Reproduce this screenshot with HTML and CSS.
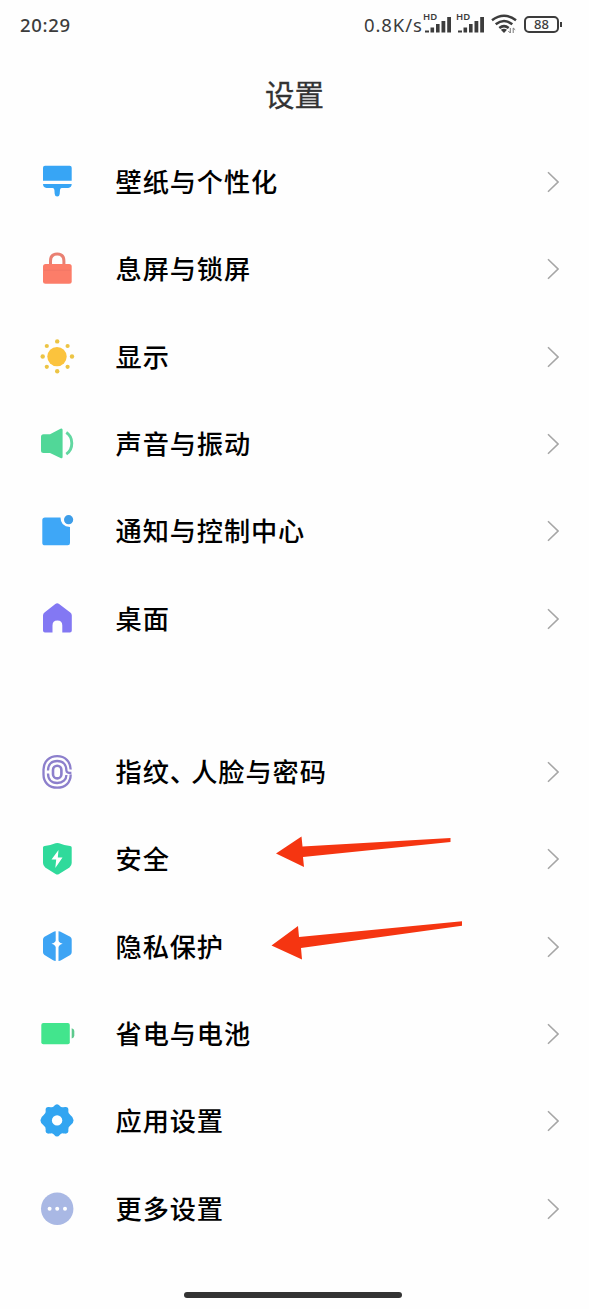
FILE: index.html
```html
<!DOCTYPE html>
<html lang="zh-CN">
<head>
<meta charset="utf-8">
<title>设置</title>
<link rel="stylesheet" href="styles.css">
</head>
<body>
<div class="phone">
  <header class="status">
    <span class="time">20:29</span>
    <span class="speed">0.8K/s</span>
    <span class="signal"><span class="hd">HD</span>
      <svg width="28" height="20" viewBox="0 0 28 20"><path d="M1 17.500h4v-2H1zM6.500 17.500h3.600v-5H6.500zM12 17.500h3.600v-8.500H12zM17.500 17.500h3.800V6h-3.800zM23.200 17.500H27V2h-3.800z"/></svg></span>
    <span class="signal"><span class="hd">HD</span>
      <svg width="28" height="20" viewBox="0 0 28 20"><path d="M1 17.500h4v-2H1zM6.500 17.500h3.600v-5H6.500zM12 17.500h3.600v-8.500H12zM17.500 17.500h3.800V6h-3.800zM23.200 17.500H27V2h-3.800z"/></svg></span>
    <svg class="wifi" width="26" height="20" viewBox="0 0 26 20">
      <g fill="none" stroke="#3c3c3c" stroke-width="2.500"><path d="M1 6.300Q13-2.700 25 6.300M4.700 10.300Q13 3.800 21.300 10.300M8.300 14Q13 10.300 17.700 14"/></g>
      <path d="M9.800 15.700Q13 13.600 16 15.700L13 19z"/><path d="M19.300 14v5l-2-2M22.200 19v-5l2 1.800" fill="none" stroke="#777"/>
    </svg>
    <span class="battery"><span class="level">88</span></span>
  </header>
  <h1 class="title">设置</h1>
  <main>
    <section class="group">
      <div class="row"><svg class="icon" viewBox="0 0 40 40" fill="#37a5f5"><path d="M8 3.800h24.700q2 0 2 2v12.900H6V5.800q0-2 2-2zM6 22h28.700q0 3.500-3.500 4h-6.500q-1.500 0-1.700 2l-.3 4q-.2 2.500-2.500 2.500t-2.500-2.500l-.3-4q-.2-2-1.700-2H9.500Q6 25.500 6 22z"/></svg><span class="label">壁纸与个性化</span><svg class="chev" viewBox="0 0 12 22"><path d="M1 1.300 11 11 1 20.700"/></svg></div>
      <div class="row"><svg class="icon" viewBox="0 0 40 40"><path d="M13.500 17v-5q0-7 6.700-7t6.700 7v5" fill="none" stroke="#e98072" stroke-width="3"/><rect x="6" y="15" width="28.700" height="19.700" rx="2.500" fill="#fc7d69"/><path d="M7 21.300h26.700" stroke="#ef7664" stroke-width=".7"/></svg><span class="label">息屏与锁屏</span><svg class="chev" viewBox="0 0 12 22"><path d="M1 1.300 11 11 1 20.700"/></svg></div>
      <div class="row"><svg class="icon" viewBox="0 0 40 40" fill="#fbc33d"><circle cx="20" cy="19.600" r="9.700"/><g fill="#ecc444"><circle cx="20.200" cy="4.400" r="2.200"/><circle cx="20.200" cy="34.300" r="2.200"/><circle cx="5.700" cy="19.500" r="2.200"/><circle cx="35" cy="19.500" r="2.200"/><circle cx="9.800" cy="9" r="2.100"/><circle cx="30.600" cy="9" r="2.100"/><circle cx="9.800" cy="29.800" r="2.100"/><circle cx="30.600" cy="29.800" r="2.100"/></g></svg><span class="label">显示</span><svg class="chev" viewBox="0 0 12 22"><path d="M1 1.300 11 11 1 20.700"/></svg></div>
      <div class="row"><svg class="icon" viewBox="0 0 40 40" fill="#51d798"><path d="M6.500 10.300H13L23.500 4.800q2.100-1 2.100 1.200v26.700q0 2.200-2.100 1.200L13 29H6.500Q4 29 4 26.500V12.800q0-2.500 2.500-2.500z"/><path d="M29.300 8.500Q34.800 12 34.800 19.300t-5.500 10.800" fill="none" stroke="#62d7a1" stroke-width="2.900"/></svg><span class="label">声音与振动</span><svg class="chev" viewBox="0 0 12 22"><path d="M1 1.300 11 11 1 20.700"/></svg></div>
      <div class="row"><svg class="icon" viewBox="0 0 40 40"><path d="M8 6.500h15.500q0 9 9.500 9.500v16q0 2.300-2.300 2.300H8q-2.700 0-2.700-2.300V9Q5.300 6.500 8 6.500z" fill="#3ea7f7"/><circle cx="31.600" cy="8.700" r="4.600" fill="#3d9de8"/></svg><span class="label">通知与控制中心</span><svg class="chev" viewBox="0 0 12 22"><path d="M1 1.300 11 11 1 20.700"/></svg></div>
      <div class="row"><svg class="icon" viewBox="0 0 40 40"><path d="M18.300 5q1.900-1.500 3.800 0l11.200 8.500q1.500 1.200 1.500 3V31.500q0 2-2 2h-7.500v-7q0-5-4.900-5t-4.900 5v7H8q-2 0-2-2v-15q0-1.800 1.500-3z" fill="#8378f3"/></svg><span class="label">桌面</span><svg class="chev" viewBox="0 0 12 22"><path d="M1 1.300 11 11 1 20.700"/></svg></div>
    </section>
    <section class="group">
      <div class="row"><svg class="icon" viewBox="0 0 40 40" fill="none" stroke="#8c7fcc" stroke-width="2.300"><path d="M33.700 17.500C33.500 9.500 28 4.200 20.200 4.200S6.500 9.500 6.500 17.500v5c0 8 5.500 13.200 13.700 13.200S33.700 30.500 33.700 22.500"/><path d="M11 18.500C11 12.500 14.500 9 20.200 9s9.200 3.500 9.200 9.500q0 2.600 5 2.500M11 21.500c0 6 3.500 9.500 9.200 9.500s9.200-3.500 9.200-8"/><rect x="16" y="13.800" width="8.400" height="12.600" rx="4.200" stroke-width="2.600"/></svg><span class="label">指纹<span class="comma">、</span>人脸与密码</span><svg class="chev" viewBox="0 0 12 22"><path d="M1 1.300 11 11 1 20.700"/></svg></div>
      <div class="row"><svg class="icon" viewBox="0 0 40 40"><path d="M18.500 4.300q1.800-.8 3.600 0 5 2.200 11 2.600 1.600.1 1.600 1.700V24q0 2.700-2.200 4.400L22 35q-1.700 1-3.400 0L8.200 28.400Q6 26.700 6 24V8.600Q6 7 7.600 6.900q5.900-.4 10.900-2.600z" fill="#2fda9b"/><path d="M21.500 11 14.500 20.500h4.700L18.300 29 25.500 18.500h-4.700z" fill="#fff"/></svg><span class="label">安全</span><svg class="chev" viewBox="0 0 12 22"><path d="M1 1.300 11 11 1 20.700"/></svg></div>
      <div class="row"><svg class="icon" viewBox="0 0 40 40"><path d="M18.700 4.300V34q-1.500 0-3-1L7.500 28Q6 27 6 25.300V12.500q0-1.700 1.500-2.700L15.700 5.200q1.500-.9 3-.9zM21.500 4.300V34q1.500 0 3-1l8.700-5q1.500-1 1.500-2.700V12.500q0-1.700-1.500-2.700l-8.700-4.600q-1.500-.9-3-.9z" fill="#3da4f4"/><path d="M20.100 10.500q.9 5.200 5.600 6.300-4.700 1.100-5.600 6.300-.9-5.200-5.600-6.300 4.700-1.100 5.600-6.300z" fill="#fff"/></svg><span class="label">隐私保护</span><svg class="chev" viewBox="0 0 12 22"><path d="M1 1.300 11 11 1 20.700"/></svg></div>
      <div class="row"><svg class="icon" viewBox="0 0 40 40"><rect x="4.300" y="9" width="28.500" height="21.300" rx="2" fill="#42e58d"/><path d="M34.700 14.300q2.600.4 2.600 2.700v4.700q0 2.300-2.600 2.700z" fill="#5cc98d"/></svg><span class="label">省电与电池</span><svg class="chev" viewBox="0 0 12 22"><path d="M1 1.300 11 11 1 20.700"/></svg></div>
      <div class="row"><svg class="icon" viewBox="0 0 40 40"><path d="M20 3.200q1.600 0 2.700 1.500 1.300 1.800 3.600 1.500l1.800-.2q3.400-.3 3.300 3l-.1 1.200q-.2 2.300 2 3.800 3.300 2.300 3.300 5.300t-3.300 5.300q-2.200 1.500-2 3.800l.1 1.200q.1 3.300-3.300 3l-1.800-.2q-2.300-.3-3.600 1.500-1.100 1.500-2.700 1.500t-2.700-1.500q-1.300-1.800-3.600-1.500l-1.800.2q-3.400.3-3.300-3l.1-1.200q.2-2.300-2-3.800-3.300-2.300-3.300-5.300t3.300-5.300q2.200-1.500 2-3.800L8.600 9q-.1-3.300 3.300-3l1.800.2q2.300.3 3.600-1.500Q18.400 3.200 20 3.200z" fill="#32a5f1"/><circle cx="20.100" cy="19.400" r="5.200" fill="#fff"/></svg><span class="label">应用设置</span><svg class="chev" viewBox="0 0 12 22"><path d="M1 1.300 11 11 1 20.700"/></svg></div>
      <div class="row"><svg class="icon" viewBox="0 0 40 40"><circle cx="20.200" cy="19.700" r="16.200" fill="#a9b8e4"/><g fill="#fff"><circle cx="12.600" cy="19.700" r="2"/><circle cx="20.200" cy="19.700" r="2"/><circle cx="28" cy="19.700" r="2"/></g></svg><span class="label">更多设置</span><svg class="chev" viewBox="0 0 12 22"><path d="M1 1.300 11 11 1 20.700"/></svg></div>
    </section>
  </main>
  <svg class="arrows" width="200" height="130" viewBox="265 832 200 130" fill="#f53511"><path d="M276 853.500 301.500 836.500 302.500 846.500 450.500 838v4L303 857l1 10z"/><path d="M271.500 945.500 298 926l1 11 163-15.700v4.400L301 948l1 11.500z"/></svg>
  <div class="home"></div>
</div>
</body>
</html>
```
FILE: styles.css
```css
body { margin: 0; background: #fefefe; }
.phone {
  position: relative;
  width: 589px;
  height: 1309px;
  overflow: hidden;
  display: flex;
  flex-direction: column;
  font-family: "Noto Sans", "Noto Sans CJK SC", sans-serif;
}
.status {
  display: flex;
  align-items: center;
  box-sizing: border-box;
  height: 50px;
  padding: 0 30px 2px 20px;
  color: #3c3c3c;
  fill: #3c3c3c;
  font-size: 18.5px;
}
.time { letter-spacing: .7px; font-weight: 500; }
.speed { margin-left: auto; width: 60px; font-size: 18.500px; letter-spacing: .9px; white-space: nowrap; }
.signal { position: relative; width: 28px; height: 20px; margin-right: 5px; }
.signal svg { display: block; margin-top: 1px; }
.hd { position: absolute; left: -1px; top: -2px; font-size: 9.500px; line-height: 10px; font-weight: 600; }
.wifi { margin: 0 7px 0 1px; }
.battery {
  position: relative;
  box-sizing: border-box;
  width: 35px;
  height: 17px;
  border: 2px solid #3c3c3c;
  border-radius: 5px;
  display: flex;
  align-items: center;
  justify-content: center;
}
.battery::after { content: ""; position: absolute; right: -5px; top: 4px; width: 2px; height: 5px; background: #3c3c3c; }
.level { font-size: 13px; line-height: 13px; font-weight: 500; }
.title {
  margin: 0;
  height: 88.300px;
  line-height: 86px;
  text-align: center;
  font-family: "Noto Sans CJK SC", sans-serif;
  font-size: 29.500px;
  font-weight: 400;
  color: #333;
  -webkit-text-stroke: .3px #333;
}
.group + .group { margin-top: 66px; }
.row {
  display: flex;
  align-items: center;
  height: 87.330px;
  padding: 0 30px 0 37px;
}
.icon { width: 40px; height: 40px; flex: none; }
.label {
  margin-left: 38.600px;
  padding-bottom: 2px;
  flex: 1;
  font-family: "Noto Sans CJK SC", sans-serif;
  font-size: 26.200px;
  line-height: 40px;
  font-weight: 500;
  letter-spacing: .9px;
  color: #000;
}
.comma { font-feature-settings: "halt"; margin-right: 7.500px; }
.chev { width: 12px; height: 22px; fill: none; stroke: #a6a6a6; stroke-width: 1.600; }
.arrows { position: absolute; left: 265px; top: 832px; }
.home { position: absolute; left: 184px; top: 1292px; width: 218px; height: 6px; border-radius: 3px; background: #333; }
```
